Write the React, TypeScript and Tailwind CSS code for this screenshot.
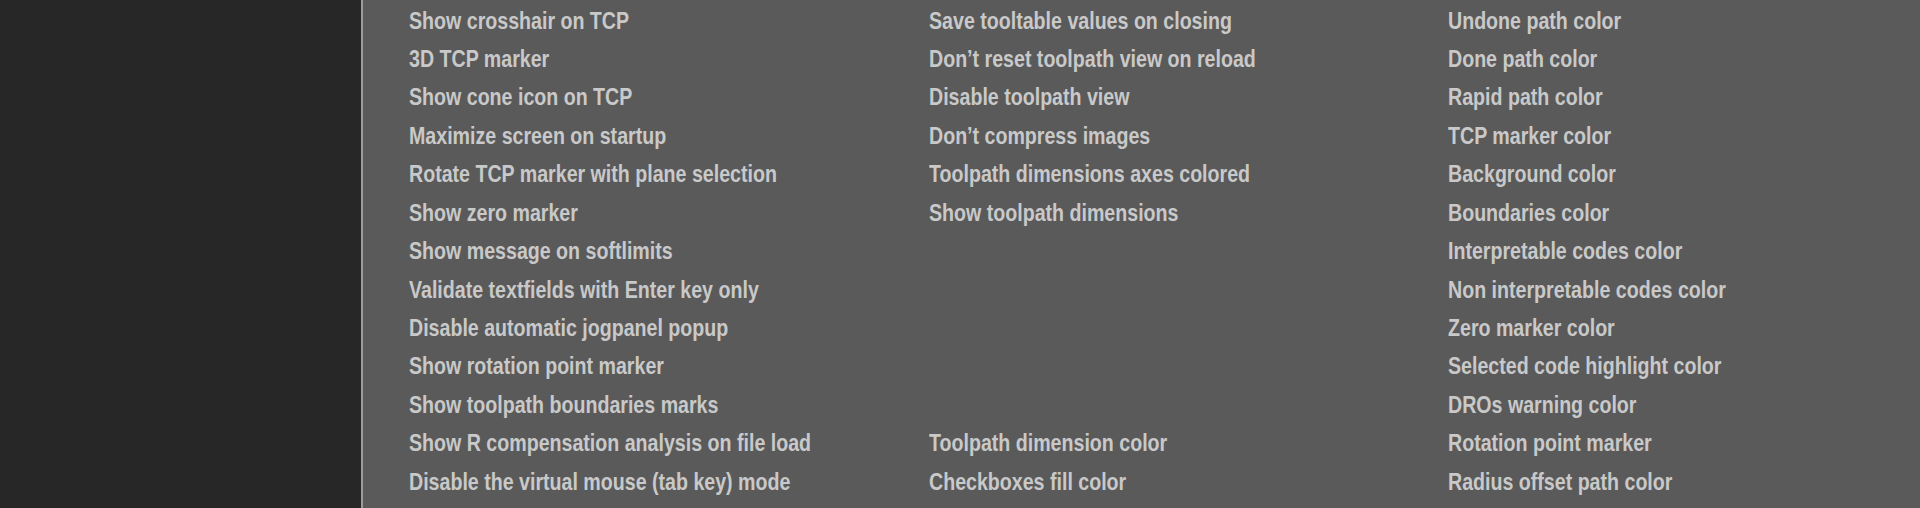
const col1 = [
  'Show crosshair on TCP',
  '3D TCP marker',
  'Show cone icon on TCP',
  'Maximize screen on startup',
  'Rotate TCP marker with plane selection',
  'Show zero marker',
  'Show message on softlimits',
  'Validate textfields with Enter key only',
  'Disable automatic jogpanel popup',
  'Show rotation point marker',
  'Show toolpath boundaries marks',
  'Show R compensation analysis on file load',
  'Disable the virtual mouse (tab key) mode',
]

const col2 = [
  'Save tooltable values on closing',
  'Don\u2019t reset toolpath view on reload',
  'Disable toolpath view',
  'Don\u2019t compress images',
  'Toolpath dimensions axes colored',
  'Show toolpath dimensions',
  '',
  '',
  '',
  '',
  '',
  'Toolpath dimension color',
  'Checkboxes fill color',
]

const col3 = [
  'Undone path color',
  'Done path color',
  'Rapid path color',
  'TCP marker color',
  'Background color',
  'Boundaries color',
  'Interpretable codes color',
  'Non interpretable codes color',
  'Zero marker color',
  'Selected code highlight color',
  'DROs warning color',
  'Rotation point marker',
  'Radius offset path color',
]

// narrow font isn't installed, so squeeze Liberation Sans to Arial Narrow widths
function Column({ items }: { items: string[] }) {
  return (
    <div className="flex flex-col">
      {items.map((label, i) => (
        <div key={i} className="h-[38.45px] whitespace-nowrap leading-[38.45px]">
          <span className="inline-block origin-left scale-x-[0.817]">{label}</span>
        </div>
      ))}
    </div>
  )
}

export default function App() {
  return (
    <div className="flex h-[508px] w-[1920px] overflow-hidden bg-[#5a5a5a]">
      <aside className="w-[361px] shrink-0 bg-[#272727]" />
      <div className="w-[2px] shrink-0 bg-[#9c9c9c]" />
      <main className="grid grow grid-cols-[520px_519px_1fr] pl-[46px] pt-[1.5px] font-['Liberation_Sans',sans-serif] text-[24px] font-bold text-[#c9c9c9]">
        <Column items={col1} />
        <Column items={col2} />
        <Column items={col3} />
      </main>
    </div>
  )
}
